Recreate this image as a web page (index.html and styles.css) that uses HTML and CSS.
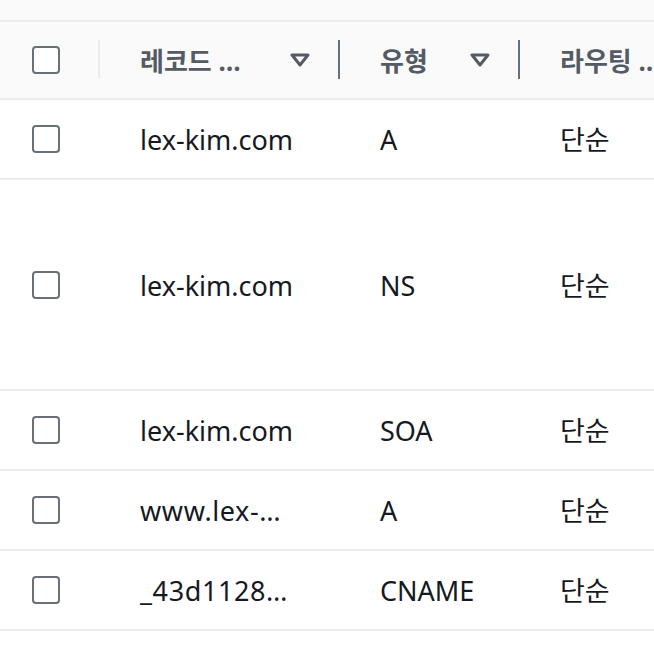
FILE: index.html
```html
<!DOCTYPE html>
<html lang="ko">
<head>
<meta charset="utf-8">
<link rel="stylesheet" href="styles.css">
</head>
<body>
<div class="top-strip"></div>
<table class="records">
  <colgroup>
    <col class="c-check">
    <col class="c-name">
    <col class="c-type">
    <col class="c-route">
  </colgroup>
  <thead>
    <tr>
      <th class="check-cell"><span class="cb"></span><span class="div div-light"></span></th>
      <th><div class="hcell"><span class="htext">레코드 …</span><svg class="sort" viewBox="0 0 20 14" width="20" height="14"><path d="M2 2 H18 L10 12 Z" fill="none" stroke="#545b64" stroke-width="3" stroke-linejoin="round"/></svg></div><span class="div"></span></th>
      <th><div class="hcell"><span class="htext">유형</span><svg class="sort" viewBox="0 0 20 14" width="20" height="14"><path d="M2 2 H18 L10 12 Z" fill="none" stroke="#545b64" stroke-width="3" stroke-linejoin="round"/></svg></div><span class="div"></span></th>
      <th class="last"><div class="hcell"><span class="htext">라우팅 …</span></div></th>
    </tr>
  </thead>
  <tbody>
    <tr>
      <td class="check-cell"><span class="cb"></span></td>
      <td>lex-kim.com</td>
      <td>A</td>
      <td>단순</td>
    </tr>
    <tr class="row-tall">
      <td class="check-cell"><span class="cb"></span></td>
      <td>lex-kim.com</td>
      <td>NS</td>
      <td>단순</td>
    </tr>
    <tr>
      <td class="check-cell"><span class="cb"></span></td>
      <td>lex-kim.com</td>
      <td>SOA</td>
      <td>단순</td>
    </tr>
    <tr>
      <td class="check-cell"><span class="cb"></span></td>
      <td class="wide">www.lex-…</td>
      <td>A</td>
      <td>단순</td>
    </tr>
    <tr>
      <td class="check-cell"><span class="cb"></span></td>
      <td class="wide">_43d1128…</td>
      <td>CNAME</td>
      <td>단순</td>
    </tr>
  </tbody>
</table>
</body>
</html>
```
FILE: styles.css
```css
html, body {
  margin: 0;
  padding: 0;
  background: #ffffff;
  overflow: hidden;
  width: 654px;
  height: 656px;
}
body {
  font-family: "Noto Sans", "Noto Sans CJK KR", sans-serif;
  color: #16191f;
}
.top-strip {
  height: 20px;
  background: #fafafa;
}
.records {
  border-collapse: collapse;
  table-layout: fixed;
  width: 654px;
}
.c-check { width: 100px; }
.c-name { width: 240px; }
.c-type { width: 180px; }
.c-route { width: 134px; }

.records thead th {
  position: relative;
  background: #fafafa;
  border-top: 2px solid #eaeded;
  border-bottom: 2px solid #eaeded;
  height: 76px;
  padding: 0 30px 0 40px;
  text-align: left;
  font-weight: 700;
  font-size: 26px;
  color: #545b64;
  white-space: nowrap;
}
.records thead th.check-cell { padding: 0 0 0 32px; }
.records thead th.last { padding-right: 0; overflow: hidden; }
.hcell {
  display: flex;
  align-items: center;
  gap: 10px;
}
.htext {
  flex: 1;
  overflow: hidden;
  text-overflow: ellipsis;
  white-space: nowrap;
}
.last .htext { overflow: visible; }
.sort { flex: none; display: block; }
.div {
  position: absolute;
  right: 0;
  top: 18px;
  width: 2px;
  height: 39px;
  background: #687078;
}
.div-light { background: #eaeded; right: 0; }

.records tbody td {
  box-sizing: border-box;
  border-bottom: 2px solid #eaeded;
  height: 80px;
  padding: 2px 20px 0 40px;
  font-size: 27px;
  line-height: 38px;
  white-space: nowrap;
  vertical-align: middle;
}
.records tbody td.wide { letter-spacing: 0.6px; }
.records tbody td.check-cell { padding: 0 0 0 32px; }
.records tbody tr.row-tall td { height: 211px; }
.cb {
  display: block;
  box-sizing: border-box;
  width: 28px;
  height: 28px;
  border: 2px solid #687078;
  border-radius: 4px;
  background: #ffffff;
}
```
